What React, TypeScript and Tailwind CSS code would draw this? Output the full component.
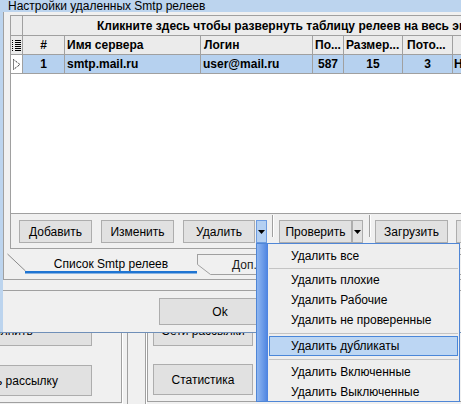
import React from "react";

const btn =
  "h-[23px] border border-[#adadad] bg-[#e1e1e1] text-[12px] text-black flex items-center justify-center shrink-0";
const bigBtn =
  "border border-[#adadad] bg-[#e1e1e1] text-[12px] text-black flex items-center justify-center shrink-0 whitespace-nowrap";

function ListIcon() {
  return (
    <svg width="9" height="11" viewBox="0 0 9 11">
      {[0, 2, 4, 6, 8, 10].map((y) => (
        <g key={y}>
          <rect x="0" y={y} width="1" height="1" fill="#000" />
          <rect x="3" y={y} width="6" height="1" fill="#000" />
        </g>
      ))}
    </svg>
  );
}

function RowMark() {
  return (
    <svg width="8" height="11" viewBox="0 0 8 11">
      <path d="M0.5 0.5 L0.5 10.5 L7 5.5 Z" fill="none" stroke="#000" strokeWidth="1" strokeDasharray="1 1" />
    </svg>
  );
}

function Arrow() {
  return (
    <svg width="7" height="4" viewBox="0 0 7 4">
      <path d="M0 0 H7 L3.5 4 Z" fill="#000" />
    </svg>
  );
}

function Sep() {
  return (
    <div className="flex shrink-0 self-stretch mt-[1px] mb-[6px]">
      <div className="w-px bg-[#a0a0a0]" />
      <div className="w-px bg-white" />
    </div>
  );
}

const menu: (string | null)[] = [
  "Удалить все",
  null,
  "Удалить плохие",
  "Удалить Рабочие",
  "Удалить не проверенные",
  null,
  "Удалить дубликаты",
  null,
  "Удалить Включенные",
  "Удалить Выключенные",
];

export default function App() {
  return (
    <div className="relative w-[461px] h-[404px] overflow-hidden bg-[#f0f0f0] font-['Liberation_Sans',Arial,sans-serif] text-black">
      {/* settings window */}
      <div className="w-[560px] h-[333px] flex flex-col bg-[#f0f0f0] border-b border-[#6f8fb8]">
        <div className="h-[12px] shrink-0 bg-[#bcd4ee] pl-[8px] text-[12px] leading-[12px] whitespace-nowrap">
          Настройки удаленных Smtp релеев
        </div>
        <div className="flex-1 flex">
          <div className="w-[3px] bg-[#bcd4ee]" />
          <div className="flex-1 flex flex-col">
            {/* tab control */}
            <div className="h-[268px] shrink-0 flex flex-col border-l border-b border-[#a0a0a0]">
              <div className="pt-[3px] pl-[6px]">
                {/* grid */}
                <div className="h-[199px] border border-[#a0a0a0] bg-white text-[12px] font-bold whitespace-nowrap">
                  <div className="h-[20px] flex bg-[#ececec] border-b border-[#a0a0a0]">
                    <div className="w-[12px] shrink-0 border-r border-[#a0a0a0]" />
                    <div className="flex-1 pl-[74px] flex items-center">
                      Кликните здесь чтобы развернуть таблицу релеев на весь экран
                    </div>
                  </div>
                  <div className="h-[19px] flex bg-[#ebebeb] border-b border-[#a0a0a0]">
                    <div className="w-[12px] shrink-0 border-r border-[#a0a0a0] flex items-center justify-center">
                      <ListIcon />
                    </div>
                    <div className="w-[42px] shrink-0 border-r border-[#a0a0a0] flex items-center justify-center">#</div>
                    <div className="w-[136px] shrink-0 border-r border-[#a0a0a0] flex items-center pl-[2px]">Имя сервера</div>
                    <div className="w-[112px] shrink-0 border-r border-[#a0a0a0] flex items-center pl-[3px]">Логин</div>
                    <div className="w-[31px] shrink-0 border-r border-[#a0a0a0] flex items-center pl-[2px]">По...</div>
                    <div className="w-[59px] shrink-0 border-r border-[#a0a0a0] flex items-center pl-[2px]">Размер...</div>
                    <div className="w-[50px] shrink-0 border-r border-[#a0a0a0] flex items-center pl-[4px]">Пото...</div>
                    <div className="w-[80px] shrink-0" />
                  </div>
                  <div className="h-[19px] flex bg-[#b6d1ef] border-b border-[#a0a0a0]">
                    <div className="w-[12px] shrink-0 bg-white border-r border-[#a0a0a0] flex items-center justify-center">
                      <RowMark />
                    </div>
                    <div className="w-[42px] shrink-0 border-r border-[#a0a0a0] flex items-center justify-center">1</div>
                    <div className="w-[136px] shrink-0 border-r border-[#a0a0a0] flex items-center pl-[2px]">smtp.mail.ru</div>
                    <div className="w-[112px] shrink-0 border-r border-[#a0a0a0] flex items-center pl-[2px]">user@mail.ru</div>
                    <div className="w-[31px] shrink-0 border-r border-[#a0a0a0] flex items-center justify-center">587</div>
                    <div className="w-[59px] shrink-0 border-r border-[#a0a0a0] flex items-center justify-center">15</div>
                    <div className="w-[50px] shrink-0 border-r border-[#a0a0a0] flex items-center justify-center">3</div>
                    <div className="w-[80px] shrink-0 flex items-center pl-[1px]">Нет</div>
                  </div>
                </div>
                {/* button panel */}
                <div className="h-[36px] flex items-start pt-[7px] pl-[8px] border-l border-b border-[#a0a0a0] -mt-px">
                  <div className={`${btn} w-[73px]`}>Добавить</div>
                  <div className={`${btn} w-[73px] ml-[9px]`}>Изменить</div>
                  <div className={`${btn} w-[72px] ml-[9px]`}>Удалить</div>
                  <div className="h-[23px] w-[11px] ml-px shrink-0 border border-[#6c9be0] bg-[#b4d0f2] flex items-center justify-center">
                    <Arrow />
                  </div>
                  <div className="ml-[5px] h-[29px] -mt-[6px] flex">
                    <Sep />
                  </div>
                  <div className={`${btn} w-[73px] ml-[5px]`}>Проверить</div>
                  <div className={`${btn} w-[11px]`}>
                    <Arrow />
                  </div>
                  <div className="ml-[6px] h-[29px] -mt-[6px] flex">
                    <Sep />
                  </div>
                  <div className={`${btn} w-[73px] ml-[4px]`}>Загрузить</div>
                  <div className={`${btn} w-[73px] ml-[8px]`}>Экспорт</div>
                </div>
              </div>
              {/* tabs */}
              <div className="relative h-[29px] flex text-[12px] whitespace-nowrap">
                <svg className="absolute inset-0" width="560" height="29" viewBox="0 0 560 29">
                  <path d="M3.5 5 L21.5 22" stroke="#8a8a8a" strokeWidth="1" fill="none" />
                  <rect x="21" y="22" width="172" height="2.5" fill="#1e74d2" />
                  <path d="M193.5 5 V15.5 L206.5 25.5 H560" stroke="#a0a0a0" strokeWidth="1" fill="none" />
                  <path d="M193.5 5.5 H560" stroke="#a0a0a0" strokeWidth="1" fill="none" />
                </svg>
                <div className="relative w-[193px] shrink-0 pl-[21px] flex items-center justify-center pt-[1px]">
                  Список Smtp релеев
                </div>
                <div className="relative pl-[35px] flex items-center pt-[3px] text-[#1a1a1a]">Доп.</div>
              </div>
            </div>
            {/* dialog bottom */}
            <div className="h-[10px] shrink-0" />
            <div className="flex-1 border-t border-[#a0a0a0] pl-[156px] pt-[7px]">
              <div className={`${bigBtn} h-[27px] w-[122px]`}>Ok</div>
            </div>
          </div>
        </div>
      </div>

      {/* main window behind */}
      <div className="flex h-[71px] overflow-hidden">
        <div className="w-[122px] shrink-0 border-r border-[#a0a0a0] border-b h-[70px]">
          <div className="h-[15px] overflow-hidden">
            <div className={`${bigBtn} h-[31px] w-[180px] -mt-[18px] -ml-[88px]`}>Выполнить</div>
          </div>
          <div className={`${bigBtn} h-[31px] w-[180px] mt-[17px] -ml-[88px]`}>Запустить рассылку</div>
        </div>
        <div className="w-px bg-white shrink-0" />
        <div className="w-[4px] shrink-0" />
        <div className="w-[19px] shrink-0 border-l border-r border-[#a0a0a0]" />
        <div className="w-px bg-white shrink-0" />
        <div className="flex-1 border-l border-[#a0a0a0] border-b h-[69px] pl-[5px]">
          <div className="h-[13px] overflow-hidden">
            <div className={`${bigBtn} h-[31px] w-[100px] -mt-[18px]`}>Сети рассылки</div>
          </div>
          <div className={`${bigBtn} h-[31px] w-[100px] mt-[18px]`}>Статистика</div>
        </div>
      </div>

      {/* dropdown menu */}
      <div className="absolute left-[256px] top-[243px] w-[204px] h-[159px] flex border border-[#4f86d6] bg-[#eeeeee] text-[12px]">
        <div className="w-[11px] shrink-0 bg-gradient-to-r from-[#8fb6f0] to-[#4b82e0]" />
        <div className="flex-1 pt-[2px] pr-[1px]">
          {menu.map((m, i) =>
            m === null ? (
              <div key={i} className={`${i === 1 ? "h-[4px]" : "h-[6px]"} flex items-center pl-[1px]`}>
                <div className="h-px flex-1 bg-[#c4c4c4]" />
              </div>
            ) : m === "Удалить дубликаты" ? (
              <div key={i} className="h-[20px] ml-[1px] flex items-center pl-[21px] bg-[#bcd6f3] border border-[#4a87d9]">
                {m}
              </div>
            ) : (
              <div key={i} className="h-[20px] flex items-center pl-[23px]">
                {m}
              </div>
            )
          )}
        </div>
      </div>
    </div>
  );
}
